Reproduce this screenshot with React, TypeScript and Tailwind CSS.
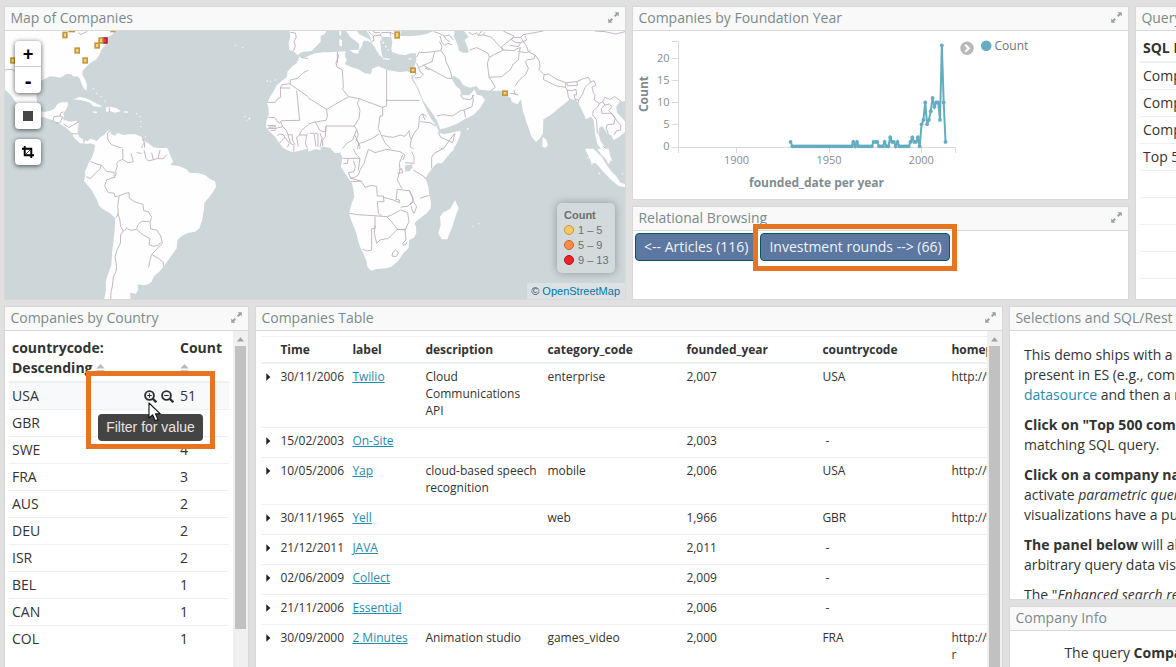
import type { ReactNode } from "react";

const LAND = "#fefefe";
const WATER = "#cdd6d9";

function ExpandIcon() {
  return (
    <svg width="11" height="11" viewBox="0 0 11 11" fill="#9aa0a1" className="mb-[2px] shrink-0">
      <path d="M6.6 0.2H10.8V4.4L9.4 3L7.4 5L6 3.6L8 1.6Z" />
      <path d="M4.4 10.8H0.2V6.6L1.6 8L3.6 6L5 7.4L3 9.4Z" />
    </svg>
  );
}

function Panel({ title, className, expand = true, children }: { title: string; className: string; expand?: boolean; children?: ReactNode }) {
  return (
    <section className={`flex flex-col overflow-hidden border border-[#d8d8d8] bg-white ${className}`}>
      <header className="flex h-6 shrink-0 items-center justify-between overflow-hidden border-b border-[#d8d8d8] bg-[#f9f9f9] pr-[6px] pl-[5.4px] text-[14px] whitespace-nowrap text-[#7b8a8b]">
        <span className="mb-[2px] leading-[20px]">{title}</span>
        {expand && <ExpandIcon />}
      </header>
      {children}
    </section>
  );
}

/* The map is drawn in four tiles, each in units of a third of a pixel. */
const TILE_NW_LAND = [
  "M15 93H347L335 105L322 111V130L305 148L298 165L290 177L270 190L256 203L248 213L247 225L256 240L261 255L260 273L252 266L244 250L240 236L232 229L222 230L213 223L200 222L190 228L180 233L165 230L150 229L135 236L125 241L112 258L109 290L112 312L120 332L130 336L150 333L165 325L172 312L185 307L204 307L203 318L196 332L189 340L193 345L188 358L200 362L212 365L228 362L236 370L234 385L232 400L239 412L252 420L262 424L272 416L283 420L290 424L300 412L312 405L322 394L334 390L332 402L345 407L352 399L370 405L385 403L405 403L424 410L430 422L445 430L460 441L478 445L490 445L500 452L508 461L515 482H272L283 452L285 435L272 430L262 432L250 430L240 430L222 413L215 398L200 385L185 375L170 366L150 358L130 352L110 355L90 345L60 322L45 303L35 288L25 278L15 270Z",
  "M222 298L238 291L258 295L275 303L292 312L306 318L300 321L280 319L268 307L250 302L236 300Z",
  "M318 322L335 321L350 325L362 334L345 338L332 334L318 335Z",
  "M278 334L292 335L290 339L280 338Z",
  "M371 334H384V338H371Z",
  "M868 93L871 108L866 130L868 150L880 153L893 166L905 156L935 153L962 125V93Z",
  "M962 160L930 167L915 172L898 170L890 190L875 200L862 215L861 230L845 243L830 256L820 275L808 295L801 310L806 325L806 345L799 365L798 380L810 396L825 410L838 430L850 444L865 452L880 457L905 451L930 443L962 451Z",
];
const TILE_NW_BORDERS = [
  "M235 98L243 104L262 94M15 211L22 208L38 209L44 214",
  "M190 335L181 340L180 348L162 350L158 366M180 348L188 352L180 368L166 370M236 366L220 374L206 383L199 376L190 372M216 401L232 402M252 420V428",
  "M328 323V336M334 391L322 400L324 420L334 434L352 440L368 445L371 484M427 416L433 428L425 440L434 458L413 462L392 460L400 476L393 484M434 428L432 462L440 478M460 443L452 452L450 468L460 474L462 484M483 446L480 460L484 474L478 484M502 452L500 470L492 478",
  "M871 97L886 99L889 112L882 124L886 138L880 152M903 172L925 176L936 205L912 217L892 235L871 240V253L960 315M871 251L846 254L841 264L871 264M841 264L842 292L834 295L826 307H801M890 272L899 361L845 362L838 370L824 353L806 352M802 377L828 376M804 386L828 385M806 382L828 380M828 390L812 392M824 385L832 384L848 380L842 365M848 380L860 392L864 405L877 404V420L885 434M832 408L838 402L850 404L855 412L845 422L838 430M855 412L868 430L862 442M864 405L872 430L882 436L881 455M899 405H920L916 430L922 444M899 405L902 395L915 382L928 372L945 363L962 362M920 402H945L942 420L945 444M899 405L890 412L895 440M945 402L958 400L954 444",
];
const TILE_SW_LAND = [
  "M284 -6H502L512 18L519 34L512 45L535 48L560 58L568 68L595 70L615 75L630 87L645 93L648 110L640 125L625 145L613 158L611 185L606 212L598 235L585 245L565 248L545 258L532 270L530 295L518 312L505 330L492 348L478 365L462 378L455 395L445 403L430 406L413 403L414 420L408 431L390 428L392 450H312L318 420L317 395L325 370L334 345L336 310L340 280L344 240L346 205L330 190L305 175L296 165L291 150L275 120L262 105L252 92L256 76L254 65L262 50L266 38L275 26L286 8Z",
];
const TILE_SW_BORDERS = [
  "M368 -3L369 28L356 33L350 40L352 50L347 62L348 75L343 80L342 67L330 66L320 64L303 45L290 42L273 35M303 45L300 58L285 70L275 82L270 86L259 80M347 82L335 84L320 90L314 108L325 128L342 129L345 140L355 138L376 130L387 128L388 145L405 156L429 163L431 182L445 185L455 202L450 216L452 237L470 240L482 258L487 280L455 313L450 330L446 353M357 139L353 170L355 190L348 203M353 190L359 205L362 230L370 243L362 255L361 280L351 300L345 320L350 350L348 365L340 380L337 410L333 425L332 450M370 243L380 235L393 241L410 238L413 225L425 214L448 214M411 240L430 255L450 266L447 284L460 289L475 286L482 277M457 315L475 325L490 337V349M393 10L400 35L385 38L370 30M410 8L425 10M432 0L438 25L445 33L460 29L455 8M460 29L475 25L480 0M475 26L490 26L500 14",
];
const TILE_NE_LAND = [
  "M-5 93H49L45 101L25 111L15 121L10 134L0 150L-5 152Z",
  "M108 93H140L148 103L160 109L178 118L184 128L172 122L160 122L158 132L151 146L147 150L148 133L138 124L122 112Z",
  "M118 150L148 149L144 161L130 158Z",
  "M88 118L96 120L96 138L88 139Z",
  "M88 93H94L93 108L88 104Z",
  "M170 93H272L270 108L300 109L330 106L352 101L372 93H945V303L928 307L918 322L922 338L934 352L945 364V396L928 410L910 421L905 407L890 398L877 378L867 384L865 402L872 424L884 440L895 455L900 490H893L884 462L873 446L862 432L855 398L851 360L842 350L828 358L820 340L808 314L798 300L782 297L770 306L755 318L722 345L700 358L699 400L690 415L678 426L665 410L650 368L638 330L633 298L622 313L605 305L602 293L592 288L578 272L542 272L508 269L499 258L480 263L460 256L447 236L430 227L427 240L438 258L450 268L455 286L478 286L494 268L500 284L515 287L525 300L510 325L490 345L465 357L440 372L410 383L390 388L384 370L375 352L360 330L340 302L325 265L310 238L311 226L303 226L306 240L318 258L332 290L346 323L361 354L378 375L388 398L402 403L430 397L452 392L450 408L438 434L418 463L396 490H95L97 470L90 459L75 458L61 444L42 440L25 445L-5 455V168L15 160L40 157L60 157L82 155L108 154L104 165L110 180L105 193L125 202L145 208L165 220L183 222L186 206L205 199L230 209L250 213L270 217L290 214L305 218L311 205L319 182L318 160L300 160L285 166L265 163L246 156L244 145L247 126L244 112L215 110L215 125L210 118L212 140L215 160L220 174L208 166L197 147L184 126L181 110Z",
  "M217 174L240 176L238 180L220 178Z",
  "M294 176L306 173L300 180Z",
  "M698 411L708 418L714 435L706 443L697 440Z",
  "M826 448L845 451L868 470L885 490H845Z",
];
const TILE_NE_WATER = [
  "M434 93L432 110L441 130L447 152L460 158L476 158L474 145L464 120L476 110L462 93Z",
  "M215 122L222 115L242 112L243 150L232 156L223 150Z",
];
const TILE_NE_BORDERS = [
  "M176 95L190 108L192 122L185 124M190 108L210 105L215 98L240 97L252 102M210 105L215 110M188 93L195 98L210 97M240 97L242 108",
  "M372 95L390 101L402 108L418 106L430 120M390 108L396 128L404 136L414 130L426 134M402 108L408 118L420 125M388 125L396 138L393 152L368 155L345 158L328 156L320 172M393 152L405 168L408 185L420 210L427 236M320 190L326 203L340 196L366 185L374 155M340 196L412 235L427 235M326 203L330 215L340 222L332 232L314 234M314 205L318 222L312 228M345 204L360 210",
  "M380 348L398 344L428 348L450 333L462 330L467 352M462 330L486 320L490 300L487 285M452 283L458 296L482 299L492 285",
  "M82 157L86 170L78 188L80 200L97 210L100 260L98 268L116 290L148 296L217 322L230 318V210M229 301H328M-5 294L50 328L116 290M50 328L52 350L48 361L16 366L-5 372M82 155V190",
  "M148 296L142 310L150 330L147 355L133 378L60 378L48 378L46 396L30 392L16 366M48 378L46 410L38 420V440M14 400L24 402V440M0 400H12L18 440M30 400L36 415L30 442M133 378L140 388L134 404L128 420L110 430L98 445L90 458M140 388L145 405L138 420L148 430L162 426L185 416L207 402M218 320V348H210L205 386L214 406L233 410L250 412L270 405L285 409L297 392L299 408L304 418L312 400L326 382L328 350L337 341L350 350M134 404L150 440L145 460L165 458M148 430L140 450L150 478M214 406L226 430L245 448L262 460L278 458L306 461M98 475H150M165 490L172 458L190 455L212 462L230 450L245 452M306 461L310 480M304 418L300 440L330 458L370 462L385 448L402 444L432 402M330 365L360 368L378 378M385 396L392 412L428 428L435 400M370 462L366 490M337 341L345 360M306 461L345 470M278 458V490",
  "M478 150L500 143L515 150L534 160L538 172L532 190L535 215L537 232L543 240L556 262L542 272M538 172L556 162L580 150L612 152L620 146L632 143M537 232L575 230L600 210L610 192L625 180L628 155L650 158L662 152M612 270L615 283L625 285M600 280L618 282M615 258L628 240L648 222L655 205L646 185L650 180L672 176L675 165L655 155L650 140M675 165L688 182L690 200L686 208L705 226M476 97L488 104L500 98L505 106L520 105L525 97M505 106L515 93M520 105L545 112L565 135L580 150L575 140L600 120L610 112L632 112L640 104L700 93M580 93L590 98L612 108L604 120L618 128L632 128L625 140L600 136M632 112L650 140M632 128L650 120L645 108M632 143L626 156",
  "M702 225L715 222L740 238L768 248L766 262L740 258L715 246L700 238ZM770 248L800 245L803 256L772 257ZM766 262L772 270L775 290L780 300M772 270L785 272L798 268L800 285L792 284L795 298L806 300L804 310M800 245L820 236L835 232L842 246L852 242L858 255L846 262L850 278L855 285L853 300L868 310L864 320L850 332L848 345L860 360L862 400M842 246L825 262L818 282L806 300M868 310L878 305L885 292L900 298L914 290L935 305M878 305L885 315L898 312L906 320L896 332L910 345L922 365L932 375V390L920 392L912 405M885 315L874 325L876 340L904 340L915 355L912 372L892 374L888 384L895 400M878 438L888 446M855 93L885 95L918 102L945 95",
];
const TILE_SE_LAND = [
  "M62 -4L75 8L92 6L99 25L92 50L104 68L115 85L126 100L130 120L133 140L125 160L117 190L125 215L136 240L144 270L150 290L162 315L170 335L172 350L184 362L200 357L228 355L245 350L265 332L280 310L296 294L297 270L312 263L319 250L318 230L313 219L330 205L350 190L362 175L363 155L358 135L355 110L347 85L355 70L375 45L402 25L425 5L434 -4Z",
  "M435 150L446 175L440 190L425 235L412 268L395 268L385 250L392 225L390 200L400 187L420 177L430 160Z",
  "M826 -4H850L875 20L890 45L905 65L918 78L930 97L945 103V112L925 108L900 86L880 65L858 40L840 18Z",
  "M862 -4H896L900 15L907 33L890 30L874 14Z",
  "M485 228L491 229L489 232ZM505 219L509 220L507 224ZM935 68L940 70L937 74ZM830 20L836 24L835 28ZM842 36L850 44L845 44ZM866 65L872 73L866 72Z",
];
const TILE_SE_BORDERS = [
  "M98 25H150L138 12L130 -4M115 25L112 40H100M150 25L145 60M130 32L136 50L132 65L115 68L122 85M120 85L134 82L145 75L150 60L162 40L168 20L175 -2L195 8L230 -2L270 5L285 15L278 30M122 94H154L165 112L185 106L200 110L202 138L220 138L222 155L202 155L205 190L215 198M120 84L155 94M118 190L145 194L190 197L230 200L245 195M195 200V236H185V300L172 303L158 298M195 225L193 250L200 280L210 270L235 265L262 238M230 200L245 215L262 238L285 240L297 215L293 188L272 180L245 195M220 142L250 150L268 158V150L258 148L262 118L298 122L310 150L295 168L272 172M298 122L308 140L310 155L300 165M310 155L320 170L312 190L306 178L303 168M275 115L262 90L270 60L268 40L278 15M262 70L278 68L275 55L268 60M310 60L340 78L348 88M285 38L312 40V20L305 5M365 55V22L372 10L400 -4M330 145L358 136M262 238L285 238L288 270L280 278M285 272Q275 280 280 286Q290 285 290 276M248 308L256 300L266 308L258 320L246 318Z",
];

const MARKERS = [
  [187, 95, 16, 20], [205, 86, 20, 11], [331, 86, 16, 11], [223, 142, 17, 19], [247, 172, 17, 19],
  [283, 127, 17, 19], [295, 112, 16, 19], [30, 172, 17, 19], [1183, 94, 17, 22], [1230, 202, 18, 17], [1506, 271, 18, 17],
];

function Tile({ x, y, land, water = [], borders }: { x: number; y: number; land: string[]; water?: string[]; borders: string[] }) {
  return (
    <g transform={`translate(${x} ${y})`}>
      {land.map((d) => <path key={d} d={d} fill={LAND} />)}
      {water.map((d) => <path key={d} d={d} fill={WATER} />)}
      {borders.map((d) => <path key={d} d={d} fill="none" stroke="#b9acbb" strokeWidth="2.6" strokeLinejoin="round" />)}
    </g>
  );
}

function WorldMap() {
  return (
    <svg className="block" width="620" height="268" viewBox="15 93 1860 804">
      <rect x="15" y="93" width="1860" height="804" fill={WATER} />
      <Tile x={0} y={0} land={TILE_NW_LAND} borders={TILE_NW_BORDERS} />
      <Tile x={0} y={450} land={TILE_SW_LAND} borders={TILE_SW_BORDERS} />
      <Tile x={930} y={0} land={TILE_NE_LAND} water={TILE_NE_WATER} borders={TILE_NE_BORDERS} />
      <Tile x={930} y={450} land={TILE_SE_LAND} borders={TILE_SE_BORDERS} />
      <path d="M1217 494L1228 495L1236 492L1238 502L1230 513L1217 515L1214 505Z" fill={WATER} />
      <g fill={LAND}>
        <circle cx="1403" cy="387" r="3" /><circle cx="802" cy="243" r="2.5" /><circle cx="812" cy="244" r="2" />
        <circle cx="826" cy="240" r="2" /><circle cx="735" cy="350" r="2" /><circle cx="748" cy="356" r="2.5" />
        <circle cx="740" cy="362" r="1.6" /><circle cx="706" cy="136" r="1.8" /><circle cx="728" cy="142" r="1.8" />
        <circle cx="280" cy="266" r="2" /><circle cx="290" cy="280" r="2" /><circle cx="303" cy="290" r="2" />
        <circle cx="315" cy="303" r="2" /><circle cx="420" cy="350" r="2" /><circle cx="423" cy="365" r="2" />
        <circle cx="422" cy="380" r="2" /><circle cx="410" cy="341" r="1.8" /><circle cx="436" cy="410" r="2" />
        <circle cx="1150" cy="128" r="2.5" /><circle cx="1158" cy="140" r="2.5" /><circle cx="1165" cy="150" r="2.5" />
      </g>
      <rect x="309" y="114" width="12" height="15" fill="#e8404a" stroke="#ab1823" strokeWidth="4.5" />
      {MARKERS.map(([x, y, w, h]) => (
        <rect key={`${x}-${y}`} x={x + 2.5} y={y + 2.5} width={w - 5} height={h - 5} fill="#fbd27d" stroke="#c5963a" strokeWidth="5" />
      ))}
    </svg>
  );
}

function MapControls() {
  const box = "flex w-[26px] flex-col items-center rounded bg-white shadow-[0_1px_5px_rgba(0,0,0,0.65)]";
  return (
    <div className="absolute top-[10px] left-[10px] flex flex-col gap-[10px] font-['DejaVu_Sans_Mono',monospace] text-[17px] font-bold text-black">
      <div className={box}>
        <span className="flex h-[26px] w-full items-center justify-center border-b border-[#ccc] leading-[26px]">+</span>
        <span className="flex h-[26px] items-center pt-[3px] leading-[26px]">-</span>
      </div>
      <div className={`${box} h-[26px] justify-center`}>
        <span className="size-[10px] bg-[#464646]" />
      </div>
      <div className={`${box} h-[26px] justify-center`}>
        <svg width="12" height="12" viewBox="0 0 12 12" fill="none" stroke="#000" strokeWidth="1.9">
          <path d="M0 2.7H9.3V12M2.7 0V9.3H12" />
          <path d="M3.5 8.5L9 3" strokeWidth="0.7" />
        </svg>
      </div>
    </div>
  );
}

const BINS = [
  { label: "1 – 5", dot: "border-[#c5963a] bg-[#fdc763]" },
  { label: "5 – 9", dot: "border-[#c8642c] bg-[#fd8d4b]" },
  { label: "9 – 13", dot: "border-[#b3151c] bg-[#ee2329]" },
];

function MapPanel() {
  return (
    <Panel title="Map of Companies" className="w-[622px]">
      <div className="relative h-[268px] font-['Liberation_Sans',sans-serif]">
        <WorldMap />
        <MapControls />
        <div className="absolute top-[172px] left-[552px] flex h-[70px] w-[58px] flex-col rounded-[5px] bg-[#d2dadc] pt-[5px] pl-[7px] text-[11px] leading-[15px] text-[#6b6f70] shadow-[0_0_8px_rgba(0,0,0,0.3)]">
          <b>Count</b>
          {BINS.map((bin) => (
            <span key={bin.label} className="flex items-center gap-[4px] whitespace-nowrap">
              <i className={`mb-px size-[10px] rounded-full border ${bin.dot}`} />
              {bin.label}
            </span>
          ))}
        </div>
        <div className="absolute right-0 bottom-0 h-[16px] bg-white/30 pr-[5px] pl-[4px] text-[11px] leading-[16px] text-[#444]">
          © <span className="text-[#0078a8]">OpenStreetMap</span>
        </div>
      </div>
    </Panel>
  );
}

const COUNTS: Record<number, number> = {
  1929: 1, 1963: 1, 1965: 1, 1974: 1, 1975: 1, 1976: 1, 1980: 1, 1983: 2, 1984: 1, 1985: 1, 1987: 1,
  1994: 1, 1995: 2, 1996: 1, 1997: 1, 1998: 2, 2000: 5, 2001: 6, 2002: 10, 2003: 5, 2004: 6, 2005: 8,
  2006: 11, 2007: 9, 2008: 10, 2009: 10, 2010: 6, 2011: 23, 2012: 10, 2013: 1,
};
const POINTS = Array.from({ length: 2013 - 1929 + 1 }, (_, i) => {
  const year = 1929 + i;
  return [829.3 + (year - 1950) * 1.845, 146.3 - (COUNTS[year] ?? 0) * 4.39];
});

function YearChart() {
  return (
    <svg className="block font-['Open_Sans',sans-serif]" width="495" height="168" viewBox="633 31 495 168">
      <path d="M672 41.5H678.5V153M672 58.5H678M672 80.5H678M672 102.5H678M672 124.5H678M672 147.5H955.5V153M736.5 147V153M829.5 147V153M921.5 147V153" fill="none" stroke="#d8dadb" />
      <g fill="#848e96" fontSize="11" textAnchor="end">
        <text x="669.5" y="62">20</text>
        <text x="669.5" y="84">15</text>
        <text x="669.5" y="106">10</text>
        <text x="669.5" y="128">5</text>
        <text x="669.5" y="150">0</text>
      </g>
      <g fill="#848e96" fontSize="11" textAnchor="middle">
        <text x="736.5" y="164">1900</text>
        <text x="829" y="164">1950</text>
        <text x="921.2" y="164">2000</text>
      </g>
      <g fill="#7f8c92" fontSize="12" fontWeight="700" textAnchor="middle">
        <text x="816.5" y="187" textLength="135">founded_date per year</text>
        <text transform="translate(648 94) rotate(-90)">Count</text>
      </g>
      <polyline points={POINTS.map((p) => p.join(",")).join(" ")} fill="none" stroke="#64adc1" strokeWidth="2" />
      {POINTS.map(([x, y]) => <circle key={x} cx={x} cy={y} r="1.9" fill="#64adc1" />)}
      <circle cx="967" cy="48.3" r="6.7" fill="#b8b8b8" />
      <path d="M965.2 44.8L968.8 48.3L965.2 51.8" fill="none" stroke="#fff" strokeWidth="2.2" />
      <circle cx="986.2" cy="45.7" r="5.3" fill="#64adc1" />
      <text x="994.5" y="50" fontSize="12" fill="#6f7779">Count</text>
    </svg>
  );
}

const COUNTRIES: [string, number | null][] = [
  ["USA", 51], ["GBR", null], ["SWE", 4], ["FRA", 3], ["AUS", 2], ["DEU", 2], ["ISR", 2], ["BEL", 1], ["CAN", 1], ["COL", 1],
];

function SortIcon() {
  return (
    <svg width="9" height="11" viewBox="0 0 9 11" fill="#b4bcc2" className="inline-block align-[-2px]">
      <path d="M4.5 0L8.7 4.6H0.3ZM0.3 6.2H8.7L4.5 10.8Z" />
    </svg>
  );
}

function Magnifier({ plus = false }: { plus?: boolean }) {
  return (
    <svg width="13" height="13" viewBox="0 0 13 13" fill="none" stroke="#2d2d2d">
      <circle cx="5.5" cy="5.5" r="4.4" strokeWidth="1.9" />
      <path d="M8.8 8.8L12.3 12.3" strokeWidth="2.3" />
      <path d={plus ? "M3.2 5.5H7.8M5.5 3.2V7.8" : "M3.2 5.5H7.8"} strokeWidth="1.1" />
    </svg>
  );
}

function Scrollbar({ thumb }: { thumb: string }) {
  return (
    <div className="flex w-[15px] shrink-0 flex-col items-center self-stretch bg-[#f0f0f0]">
      <svg width="15" height="15" viewBox="0 0 15 15" className="shrink-0">
        <path d="M4 10.4L7.5 6.2L11 10.4Z" fill="#a0a0a0" />
      </svg>
      <div className={`w-[11px] shrink-0 bg-[#c1c1c1] ${thumb}`} />
    </div>
  );
}

function CountryPanel() {
  return (
    <Panel title="Companies by Country" className="w-[245px]">
      <div className="flex h-[345px]">
        <div className="ml-[4px] flex w-[220px] flex-col pt-[7px] text-[14px] text-[#333]">
          <div className="flex h-[45px] shrink-0 border-b-2 border-[#ecf0f1] pl-[3px] leading-[20px] font-bold">
            <div className="w-[168px]">
              countrycode:<br />Descending <SortIcon />
            </div>
            <div>
              Count<br /><SortIcon />
            </div>
          </div>
          {COUNTRIES.map(([code, count], i) => (
            <div key={code} className={`flex shrink-0 items-center pl-[3px] leading-[20px] ${i === 0 ? "h-[26px] bg-[#f7f9fb]" : "h-[27px] border-t border-[#ecf0f1]"}`}>
              <span className="w-[132px]">{code}</span>
              <span className="flex w-[36px] gap-[4px]">
                {i === 0 && <><Magnifier plus /><Magnifier /></>}
              </span>
              <span>{count}</span>
            </div>
          ))}
        </div>
        <div className="ml-[4px] flex"><Scrollbar thumb="h-[283px]" /></div>
      </div>
    </Panel>
  );
}

type Row = { time: string; label: string; desc?: string; cat?: string; year: string; code: string; url?: string; h: string };
const ROWS: Row[] = [
  { time: "30/11/2006", label: "Twilio", desc: "Cloud Communications API", cat: "enterprise", year: "2,007", code: "USA", url: "http://www", h: "h-[63px]" },
  { time: "15/02/2003", label: "On-Site", year: "2,003", code: "-", h: "h-[30px]" },
  { time: "10/05/2006", label: "Yap", desc: "cloud-based speech recognition", cat: "mobile", year: "2,006", code: "USA", url: "http://www", h: "h-[47px]" },
  { time: "30/11/1965", label: "Yell", cat: "web", year: "1,966", code: "GBR", url: "http://www", h: "h-[30px]" },
  { time: "21/12/2011", label: "JAVA", year: "2,011", code: "-", h: "h-[30px]" },
  { time: "02/06/2009", label: "Collect", year: "2,009", code: "-", h: "h-[30px]" },
  { time: "21/11/2006", label: "Essential", year: "2,006", code: "-", h: "h-[30px]" },
  { time: "30/09/2000", label: "2 Minutes", desc: "Animation studio", cat: "games_video", year: "2,000", code: "FRA", url: "http://www r", h: "h-[60px]" },
];
const COLS = "grid grid-cols-[19.4px_72px_73px_122px_139px_136px_129px_60px] w-[751px] shrink-0";

function CompaniesTable() {
  return (
    <Panel title="Companies Table" className="w-[748px]">
      <div className="flex h-[345px]">
        <div className="ml-[5px] flex w-[726px] flex-col overflow-hidden pt-[5px] text-[12px] leading-[17px] text-[#333]">
          <div className={`${COLS} h-[28px] border-t border-b-2 border-[#ecf0f1] pt-[4px] font-bold`}>
            <span /><span>Time</span><span>label</span><span>description</span><span>category_code</span><span>founded_year</span><span>countrycode</span><span>homepage</span>
          </div>
          {ROWS.map((r, i) => (
            <div key={r.label} className={`${COLS} pt-[4px] ${r.h} ${i > 0 ? "border-t border-[#ecf0f1]" : ""}`}>
              <span className="pt-[5px] pl-[5px]">
                <svg width="5" height="8" viewBox="0 0 5 8" fill="#222"><path d="M0.3 0.2L4.4 4L0.3 7.8Z" /></svg>
              </span>
              <span>{r.time}</span>
              <span><a className="text-[#1f8dad] underline">{r.label}</a></span>
              <span className="w-[116px]">{r.desc}</span>
              <span>{r.cat}</span>
              <span>{r.year}</span>
              <span className={r.code === "-" ? "pl-[3px]" : ""}>{r.code}</span>
              <span>{r.url}</span>
            </div>
          ))}
        </div>
        <Scrollbar thumb="h-[330px]" />
      </div>
    </Panel>
  );
}

const QUERIES = ["Companies", "Companies", "Companies", "Top 500", "", "", "", ""];

function QueryPanel() {
  return (
    <Panel title="Query" expand={false} className="w-[60px]">
      <div className="ml-[4px] flex w-[60px] flex-col text-[14px] leading-[20px] whitespace-nowrap text-[#333]">
        <div className="h-[32px] border-b-2 border-[#ecf0f1] pt-[7px] pl-[3px] font-bold">SQL Label</div>
        {QUERIES.map((q, i) => (
          <div key={i} className="h-[27px] border-b border-[#ecf0f1] pt-[3px] pl-[3px]">{q}</div>
        ))}
      </div>
    </Panel>
  );
}

function SelectionsPanel() {
  return (
    <Panel title="Selections and SQL/Rest" expand={false} className="h-[294px] w-[180px]">
      <div className="flex flex-col gap-[10px] overflow-hidden pt-[14px] pl-[14px] text-[14px] leading-[20px] whitespace-nowrap text-[#333]">
        <p>This demo ships with a<br />present in ES (e.g., companies<br /><span className="text-[#1f8dad]">datasource</span> and then a new</p>
        <p><b>Click on "Top 500 companies"</b><br />matching SQL query.</p>
        <p><b>Click on a company name</b><br />activate <i>parametric queries</i><br />visualizations have a purple</p>
        <p><b>The panel below</b> will allow<br />arbitrary query data visible</p>
        <p>The "<i>Enhanced search results</i></p>
      </div>
    </Panel>
  );
}

export default function App() {
  const button = "flex h-[28px] items-center rounded border border-[#055762] bg-[#5c77a0] pb-[2px] text-[14px] whitespace-nowrap text-[#f0f3f7]";
  return (
    <main className="relative flex h-[667px] w-[1176px] flex-col gap-[6px] overflow-hidden bg-[#e0e0e0] pt-[6px] pl-[4px] font-['Open_Sans',sans-serif]">
      <div className="flex h-[294px] shrink-0 gap-[6px] *:shrink-0">
        <MapPanel />
        <div className="flex w-[497px] flex-col gap-[6px]">
          <Panel title="Companies by Foundation Year" className="h-[194px]">
            <YearChart />
          </Panel>
          <Panel title="Relational Browsing" className="h-[94px]">
            <div className="flex gap-[3px] pt-[2px] pl-[2px]">
              <span className={`${button} w-[122px] pl-[8px]`}>&lt;-- Articles (116)</span>
              <span className={`${button} w-[190px] pl-[8.4px]`}>Investment rounds --&gt; (66)</span>
            </div>
          </Panel>
        </div>
        <QueryPanel />
      </div>
      <div className="flex h-[370px] shrink-0 gap-[6px] *:shrink-0">
        <CountryPanel />
        <CompaniesTable />
        <div className="flex flex-col gap-[6px] *:shrink-0">
          <SelectionsPanel />
          <Panel title="Company Info" expand={false} className="h-[100px] w-[180px]">
            <p className="pt-[12px] pl-[54.4px] text-[14px] leading-[20px] whitespace-nowrap text-[#333]">The query <b>Companies</b></p>
          </Panel>
        </div>
      </div>

      <div className="absolute top-[224px] left-[753px] h-[47px] w-[204px] border-[5px] border-[#e87321]" />
      <div className="absolute top-[414px] left-[98px] flex h-[27px] w-[105px] items-center justify-center rounded bg-[#444] font-['Liberation_Sans',sans-serif] text-[14px] whitespace-nowrap text-[#e4e4e4]">Filter for value</div>
      <div className="absolute top-[371px] left-[86px] h-[78px] w-[129px] border-[5px] border-[#e87321]" />
      <svg className="absolute top-[402px] left-[148px]" width="14" height="20" viewBox="0 0 14 20">
        <path d="M1 1V16L4.6 12.8L7.2 18.8L10 17.6L7.5 11.8H12.3Z" fill="#fff" stroke="#111" strokeWidth="1.1" strokeLinejoin="round" />
      </svg>
    </main>
  );
}
